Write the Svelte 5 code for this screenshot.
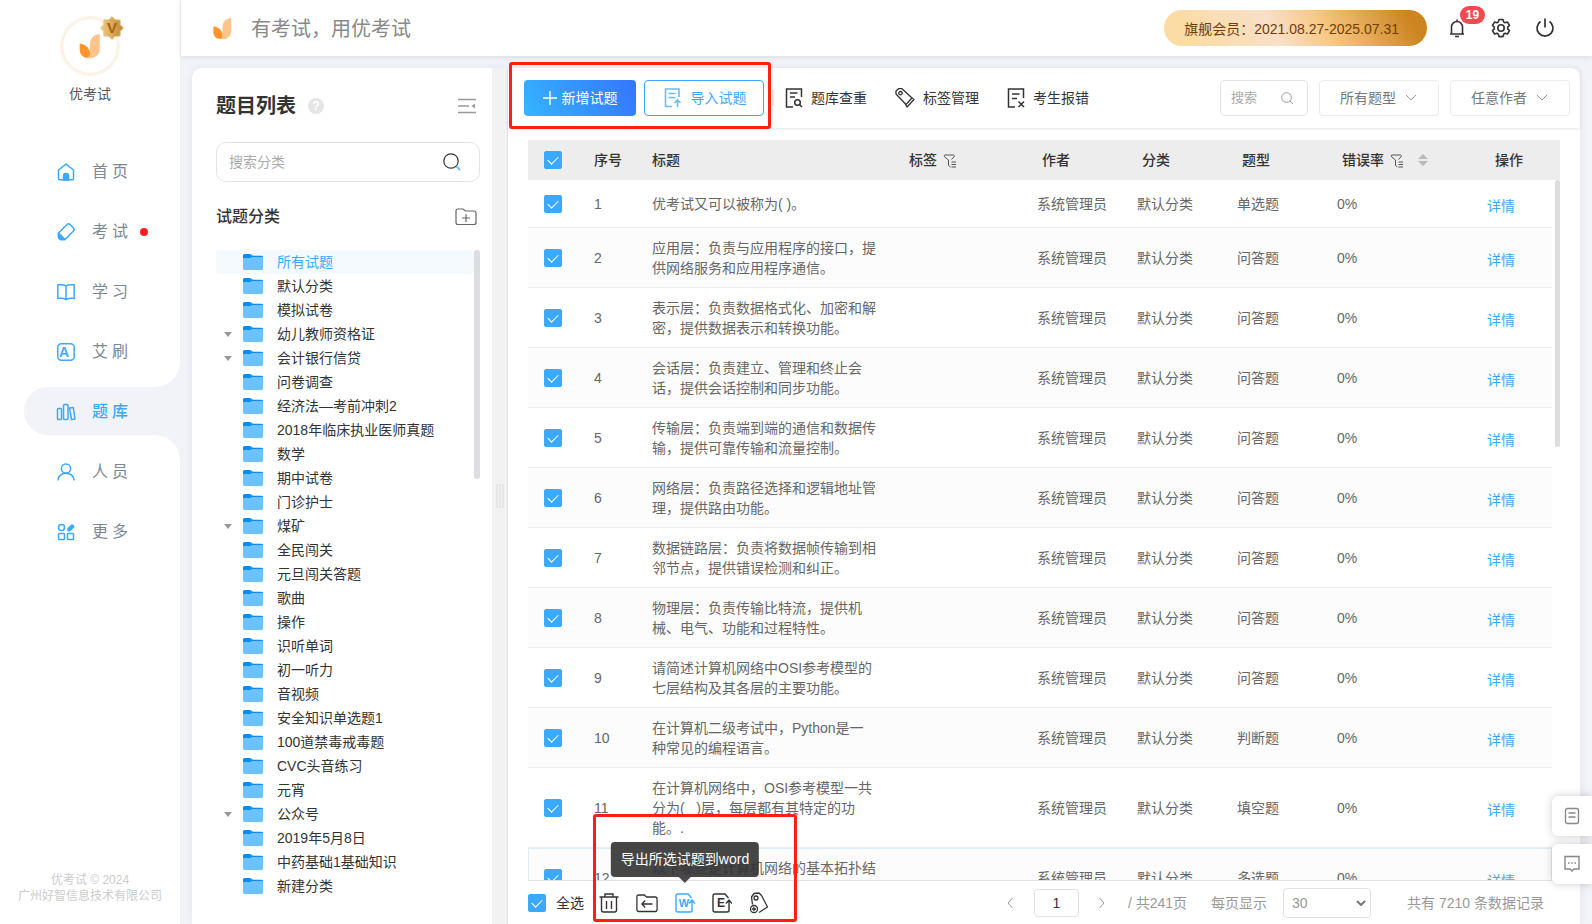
<script lang="ts">
	interface Question {
		title: string;
		type: string;
	}

	const navItems = [
		{ icon: 'home', label: '首页' },
		{ icon: 'exam', label: '考试', dot: true },
		{ icon: 'study', label: '学习' },
		{ icon: 'ai', label: '艾刷' },
		{ icon: 'bank', label: '题库' },
		{ icon: 'people', label: '人员' },
		{ icon: 'more', label: '更多' }
	];

	const categories = [
		{ name: '所有试题' },
		{ name: '默认分类' },
		{ name: '模拟试卷' },
		{ name: '幼儿教师资格证', children: true },
		{ name: '会计银行信贷', children: true },
		{ name: '问卷调查' },
		{ name: '经济法—考前冲刺2' },
		{ name: '2018年临床执业医师真题' },
		{ name: '数学' },
		{ name: '期中试卷' },
		{ name: '门诊护士' },
		{ name: '煤矿', children: true },
		{ name: '全民闯关' },
		{ name: '元旦闯关答题' },
		{ name: '歌曲' },
		{ name: '操作' },
		{ name: '识听单词' },
		{ name: '初一听力' },
		{ name: '音视频' },
		{ name: '安全知识单选题1' },
		{ name: '100道禁毒戒毒题' },
		{ name: 'CVC头音练习' },
		{ name: '元宵' },
		{ name: '公众号', children: true },
		{ name: '2019年5月8日' },
		{ name: '中药基础1基础知识' },
		{ name: '新建分类' }
	];

	const questions: Question[] = [
		{ title: '优考试又可以被称为( )。', type: '单选题' },
		{ title: '应用层：负责与应用程序的接口，提供网络服务和应用程序通信。', type: '问答题' },
		{ title: '表示层：负责数据格式化、加密和解密，提供数据表示和转换功能。', type: '问答题' },
		{ title: '会话层：负责建立、管理和终止会话，提供会话控制和同步功能。', type: '问答题' },
		{ title: '传输层：负责端到端的通信和数据传输，提供可靠传输和流量控制。', type: '问答题' },
		{ title: '网络层：负责路径选择和逻辑地址管理，提供路由功能。', type: '问答题' },
		{ title: '数据链路层：负责将数据帧传输到相邻节点，提供错误检测和纠正。', type: '问答题' },
		{ title: '物理层：负责传输比特流，提供机械、电气、功能和过程特性。', type: '问答题' },
		{ title: '请简述计算机网络中OSI参考模型的七层结构及其各层的主要功能。', type: '问答题' },
		{ title: '在计算机二级考试中，Python是一种常见的编程语言。', type: '判断题' },
		{ title: '在计算机网络中，OSI参考模型一共分为(\u00a0\u00a0\u00a0)层，每层都有其特定的功能。.', type: '填空题' },
		{ title: '以下哪些是计算机网络的基本拓扑结构？', type: '多选题' }
	];

	let activeNav = $state('题库');
	let activeCategory = $state('所有试题');
	let checked = $state(questions.map(() => true));
	let allChecked = $derived(checked.every(Boolean));

	function toggleAll() {
		const next = !allChecked;
		checked = questions.map(() => next);
	}
</script>

{#snippet leaf(size: number)}
	<svg width={size} height={size} viewBox="0 0 22 24">
		<path d="M20 1C14 1.500 11 5.500 11 11v6c0 3-2 5-4 5.500 6 2.500 13-1 13-7.500Z" fill="#ffc48c" />
		<path d="M1.500 10c6 .5 9.500 4.500 9.500 9 0 3-2 3.800-4 3.800-3.500-.8-5.500-4-5.500-7.500Z" fill="#ff942b" />
	</svg>
{/snippet}

{#snippet navIcon(name: string)}
	<svg class="nav-icon" viewBox="0 0 20 20" fill="none" stroke="#3ba9ff" stroke-width="1.5" stroke-linejoin="round">
		{#if name === 'home'}
			<path d="M2.5 8 10 2.200 17.5 8v8.500a1.200 1.200 0 0 1-1.200 1.200H3.700a1.200 1.200 0 0 1-1.200-1.200Z" />
			<path d="M7.500 18v-4a2.500 2.500 0 0 1 5 0v4Z" fill="#3ba9ff" />
		{:else if name === 'exam'}
			<path d="M11 2.500c1-1 2-1 3 0l3.500 3.500c1 1 1 2 0 3L9 17.500H4L2.500 15v-4Z" />
			<path d="M2.500 11 9 17.500H4.500L2.500 15.500Z" fill="#3ba9ff" />
		{:else if name === 'study'}
			<path d="M10 3.800C8 2.500 5 2.500 1.800 2.800v13.700c3-.3 6-.2 8.200 1 2.200-1.200 5.200-1.300 8.200-1V2.800C15 2.500 12 2.500 10 3.800ZM10 4v13.500" />
		{:else if name === 'ai'}
			<rect x="1.800" y="1.800" width="16.400" height="16.400" rx="3.500" />
			<text x="10" y="15" text-anchor="middle" font-size="14" font-weight="700" fill="#3ba9ff" stroke="none">A</text>
		{:else if name === 'bank'}
			<rect x="1.500" y="6.500" width="4" height="11" rx=".8" />
			<rect x="7.500" y="2.500" width="4.500" height="15" rx="1" />
			<path d="m13.500 6 3.800-.6 1.700 11.500-3.500.6Z" />
		{:else if name === 'people'}
			<circle cx="10" cy="6.500" r="4.600" />
			<path d="M2 18.500c0-4.500 3.500-7.300 8-7.300s8 2.800 8 7.300" />
		{:else}
			<circle cx="5.500" cy="5.500" r="3" />
			<path d="m12.500 7 3.500-3.500 1.200 1.200L13.700 8.200h-1.200Z" fill="#3ba9ff" stroke-width="2.500" />
			<rect x="2.500" y="11.500" width="6" height="6" rx=".8" />
			<rect x="11.500" y="11.500" width="6" height="6" rx=".8" />
		{/if}
	</svg>
{/snippet}

{#snippet folder()}
	<svg class="folder" width="20" height="16" viewBox="0 0 20 16">
		<path d="M0 1.500Q0 0 1.500 0H7l3 1.700h8.500Q20 1.700 20 3v5H0Z" fill="#0a8cf0" />
		<path d="M0 4h7l2-1h11v11.500q0 1.500-1.500 1.500h-17Q0 16 0 14.500Z" fill="#6bc2ff" />
	</svg>
{/snippet}

{#snippet filter()}
	<svg width="14" height="14" viewBox="0 0 14 14" fill="none" stroke="#555" stroke-width="1">
		<path d="M7.500 13 5.500 11.500V6L1.500 2.800Q.5 1 2 1h8.500q1.500.2.500 1.800L8.500 5.500M8.500 8H13M8.500 10.500H13M8.500 13H13" />
	</svg>
{/snippet}

{#snippet chevron()}
	<svg class="chevron" width="12" height="8" viewBox="0 0 12 8" fill="none" stroke="#999"><path d="m1 1 5 5 5-5" /></svg>
{/snippet}

<div class="app">
	<aside class="sidebar">
		<div class="avatar">
			{@render leaf(26)}
			<svg class="vip" width="24" height="24" viewBox="0 0 24 24">
				<defs>
					<linearGradient id="gold" x1="0" x2="1"><stop stop-color="#f0cd86" /><stop offset="1" stop-color="#c0852f" /></linearGradient>
				</defs>
				<path d="m12 .5 3.200 3.200 4.900.2.200 4.800L23.500 12l-3.200 3.300-.2 4.800-4.900.2L12 23.500l-3.200-3.200-4.900-.2-.2-4.800L.5 12l3.200-3.300.2-4.800 4.900-.2Z" fill="url(#gold)" stroke="#e8c88a" />
				<text x="12" y="17" text-anchor="middle" font-size="15" font-weight="700" fill="#a86410">V</text>
			</svg>
		</div>
		<div class="org">优考试</div>
		<nav>
			{#each navItems as item}
				<a href="#{item.icon}" class="nav-item" class:active={item.label === activeNav} onclick={() => (activeNav = item.label)}>
					{@render navIcon(item.icon)}
					<span>{item.label}</span>
					{#if item.dot}<i class="dot"></i>{/if}
				</a>
			{/each}
		</nav>
		<div class="copyright">优考试 © 2024<br />广州好智信息技术有限公司</div>
	</aside>

	<div class="page">
		<header>
			{@render leaf(23)}
			<span class="slogan">有考试，用优考试</span>
			<div class="member">旗舰会员：2021.08.27-2025.07.31</div>
			<button class="icon-btn bell" aria-label="消息">
				<svg width="20" height="20" viewBox="0 0 20 20" fill="none" stroke="#333" stroke-width="1.6">
					<path d="M3 16h14M4.500 15.500V9a5.500 5.500 0 0 1 11 0v6.500M8 18.500h4M10 1.500v2" />
				</svg>
				<span class="count">19</span>
			</button>
			<button class="icon-btn" aria-label="设置">
				<svg width="20" height="20" viewBox="0 0 20 20" fill="none" stroke="#333" stroke-width="1.6" stroke-linejoin="round">
					<path d="M8 1.500h4l.6 2.400 1.500.9 2.400-.7 2 3.400-1.800 1.700v1.700l1.800 1.700-2 3.400-2.400-.7-1.500.9-.6 2.400H8l-.6-2.400-1.500-.9-2.400.7-2-3.400 1.800-1.700V9.200L1.500 7.500l2-3.400 2.400.7 1.500-.9Z" />
					<circle cx="10" cy="10" r="3.200" />
				</svg>
			</button>
			<button class="icon-btn" aria-label="退出">
				<svg width="20" height="20" viewBox="0 0 20 20" fill="none" stroke="#333" stroke-width="1.7">
					<path d="M5.500 3.500a8 8 0 1 0 9 0M10 .5v9" />
				</svg>
			</button>
		</header>

		<main>
			<section class="category">
				<div class="category-head">
					<h1>题目列表</h1>
					<span class="help">?</span>
					<button class="plain" aria-label="收起">
						<svg width="20" height="16" viewBox="0 0 20 16" fill="none" stroke="#999" stroke-width="1.5">
							<path d="M1 1.500h18M1 8h11M1 14.500h18" />
							<path d="m18 5.500-3.500 2.500 3.500 2.500Z" fill="#999" stroke="none" />
						</svg>
					</button>
				</div>
				<label class="category-search">
					<input type="text" placeholder="搜索分类" />
					<svg width="18" height="18" viewBox="0 0 18 18" fill="none" stroke="#333" stroke-width="1.2">
						<circle cx="8" cy="8" r="7.2" />
						<path d="m13.500 13.500 3.500 3.500" stroke="#6bc2ff" stroke-width="2" />
					</svg>
				</label>
				<div class="category-title">
					<h2>试题分类</h2>
					<button class="plain" aria-label="新建分类">
						<svg width="22" height="18" viewBox="0 0 22 18" fill="none" stroke="#666" stroke-width="1.2">
							<path d="M1 3q0-2 2-2h5l2.500 2H19q2 0 2 2v9.500q0 2-2 2H3q-2 0-2-2ZM11 6v8M7 10h8" />
						</svg>
					</button>
				</div>
				<div class="tree">
					<ul>
						{#each categories as item}
							<li>
								<button class:active={item.name === activeCategory} onclick={() => (activeCategory = item.name)}>
									<i class="caret" class:shown={item.children}></i>
									{@render folder()}
									<span>{item.name}</span>
								</button>
							</li>
						{/each}
					</ul>
					<div class="bar"></div>
				</div>
			</section>

			<div class="splitter"><i></i><i></i><i></i></div>

			<section class="content">
				<div class="toolbar">
					<button class="primary">
						<svg width="14" height="14" viewBox="0 0 14 14" stroke="#fff" stroke-width="1.4"><path d="M7 0v14M0 7h14" /></svg>
						新增试题
					</button>
					<button class="outline">
						<svg width="18" height="20" viewBox="0 0 18 20" fill="none" stroke="#6bbcff" stroke-width="1.6">
							<path d="M15 9V1H1.500v17.500H8M4.500 5.500h7M4.500 9.500h7M13.500 19v-7M10.500 15l3-3 3 3" />
						</svg>
						导入试题
					</button>
					<i class="divider"></i>
					<button class="link">
						<svg width="18" height="20" viewBox="0 0 18 20" fill="none" stroke="#333" stroke-width="1.5">
							<path d="M16.500 9V1H1.500v18H8M5 5h7.500M5 9h5" />
							<circle cx="12.500" cy="14.500" r="2.800" />
							<path d="m14.500 16.500 2.500 2.500" />
						</svg>
						题库查重
					</button>
					<button class="link">
						<svg width="20" height="20" viewBox="0 0 20 20" fill="none" stroke="#333" stroke-width="1.3" stroke-linejoin="round">
							<path d="M1 6V3l2.500-2.300H7L17 10l-6 6.500ZM17 10l2 1.500-7 7.500-2-3.500" />
							<circle cx="5.500" cy="5.200" r="1.700" />
						</svg>
						标签管理
					</button>
					<button class="link">
						<svg width="18" height="20" viewBox="0 0 18 20" fill="none" stroke="#333" stroke-width="1.5">
							<path d="M16.500 10V1H1.500v18H8M5 6h7.500M5 10.500h5M11.500 13.500l5.500 5.500M17 13.500 11.500 19" />
						</svg>
						考生报错
					</button>
					<label class="keyword">
						<input type="text" placeholder="搜索" />
						<svg width="13" height="13" viewBox="0 0 13 13" fill="none" stroke="#999"><circle cx="5.500" cy="5.500" r="4.8" /><path d="m9 9 3 3" /></svg>
					</label>
					<label class="drop">
						<select aria-label="题型"><option>所有题型</option></select>
						{@render chevron()}
					</label>
					<label class="drop">
						<select aria-label="作者"><option>任意作者</option></select>
						{@render chevron()}
					</label>
					<div class="mark mark-top"></div>
				</div>

				<div class="table-area">
					<table>
						<colgroup>
							<col class="c-check" /><col class="c-no" /><col /><col class="c-tag" />
							<col class="c-mid" /><col class="c-mid" /><col class="c-mid" /><col class="c-rate" /><col class="c-op" />
						</colgroup>
						<thead>
							<tr>
								<th class="check"><input type="checkbox" aria-label="全选" checked={allChecked} onchange={toggleAll} /></th>
								<th class="tight">序号</th>
								<th class="tight">标题</th>
								<th>标签 {@render filter()}</th>
								<th>作者</th>
								<th>分类</th>
								<th>题型</th>
								<th>
									错误率 {@render filter()}
									<svg class="sort" width="10" height="12" viewBox="0 0 10 12" fill="#bbb"><path d="m5 0 5 5H0ZM5 12l5-5H0Z" /></svg>
								</th>
								<th class="wide">操作</th>
							</tr>
						</thead>
						<tbody>
							{#each questions as q, i}
								<tr class:hovered={i === 11}>
									<td class="check"><input type="checkbox" aria-label="选择第{i + 1}题" bind:checked={checked[i]} /></td>
									<td>{i + 1}</td>
									<td class="title">{q.title}</td>
									<td></td>
									<td>系统管理员</td>
									<td>默认分类</td>
									<td>{q.type}</td>
									<td>0%</td>
									<td class="op"><a href="#detail">详情</a></td>
								</tr>
							{/each}
						</tbody>
					</table>
					<div class="bar"></div>
				</div>

				<footer>
					<label class="all"><input type="checkbox" checked={allChecked} onchange={toggleAll} />全选</label>
					<div class="actions">
						<button class="plain" aria-label="删除">
							<svg width="20" height="20" viewBox="0 0 20 20" fill="none" stroke="#333" stroke-width="1.4">
								<path d="M.5 4h19M6 4V1h8v3M2.500 4v13q0 2 2 2h11q2 0 2-2V4M7.500 8v8M12.500 8v8" />
							</svg>
						</button>
						<button class="plain" aria-label="移动">
							<svg width="22" height="20" viewBox="0 0 24 20" preserveAspectRatio="none" fill="none" stroke="#333" stroke-width="1.4">
								<path d="M1 4q0-2 2-2h6l2.500 2H21q2 0 2 2v10.500q0 2-2 2H3q-2 0-2-2ZM18 11H6.500M10 7.500 6.500 11l3.500 3.500" />
							</svg>
						</button>
						<button class="plain export" aria-label="导出所选试题到word">
							<svg width="20" height="20" viewBox="0 0 20 20" fill="none" stroke="#3ba9ff" stroke-width="1.4">
								<path d="M16.500 5 13 1H3Q1 1 1 3v14q0 2 2 2h12q2 0 2-1.500M17 18V7.500M14 10.500 17 7l3 3.500" />
								<text x="9" y="14" text-anchor="middle" font-size="11" font-weight="700" fill="#3ba9ff" stroke="none">W</text>
							</svg>
							<span class="tip">导出所选试题到word</span>
						</button>
						<button class="plain" aria-label="导出所选试题到excel">
							<svg width="20" height="20" viewBox="0 0 20 20" fill="none" stroke="#333" stroke-width="1.4">
								<path d="M16.500 5 13 1H3Q1 1 1 3v14q0 2 2 2h12q2 0 2-1.500M17 18V7.500M14 10.500 17 7l3 3.500" />
								<text x="9" y="14" text-anchor="middle" font-size="12" font-weight="700" fill="#333" stroke="none">E</text>
							</svg>
						</button>
						<button class="plain" aria-label="设置标签">
							<svg width="20" height="22" viewBox="0 0 20 22" fill="none" stroke="#333" stroke-width="1.3" stroke-linejoin="round">
								<path d="M3.500 12.500 2.500 5 5 1.500 10 1l2.500 2.500 6 11.500-8.500 5.500" />
								<circle cx="7" cy="6" r="2" />
								<circle cx="5" cy="17" r="3.5" />
								<path d="M5 15v4M3 17h4" />
							</svg>
						</button>
						<div class="mark mark-bottom"></div>
					</div>
					<div class="pager">
						<button class="plain" aria-label="上一页"><svg width="6" height="12" viewBox="0 0 6 12" fill="none" stroke="#999"><path d="M5.500 1 1 6l4.500 5" /></svg></button>
						<input type="text" value="1" aria-label="页码" />
						<button class="plain" aria-label="下一页"><svg width="6" height="12" viewBox="0 0 6 12" fill="none" stroke="#999"><path d="M.5 1 5 6 .5 11" /></svg></button>
						<span class="pages">/ 共241页</span>
						<label class="size">
							每页显示
							<span class="size-box">
								<select><option>30</option></select>
								<svg width="10" height="6" viewBox="0 0 10 6" fill="none" stroke="#777" stroke-width="2"><path d="m1 1 4 4 4-4" /></svg>
							</span>
						</label>
						<span>共有 7210 条数据记录</span>
					</div>
				</footer>
			</section>
		</main>
	</div>

	<div class="float">
		<button aria-label="帮助文档">
			<svg width="16" height="18" viewBox="0 0 16 18" fill="none" stroke="#888" stroke-width="1.4"><rect x="1.500" y="1.500" width="13" height="15" rx="2" /><path d="M4.500 6h7M4.500 10h7" /></svg>
		</button>
		<button aria-label="在线客服">
			<svg width="18" height="18" viewBox="0 0 18 18" fill="none" stroke="#888" stroke-width="1.4"><path d="M2 1.500h14v12.500h-5l-2 2-2-2H2Z" /><path d="M5 8h1.500M8.300 8h1.500M11.500 8H13" stroke-width="1.6" /></svg>
		</button>
	</div>
</div>

<style>
	:global(body) {
		background: #f2f3f8;
	}

	.app {
		display: flex;
		height: 100vh;
		overflow: hidden;
		position: relative;
		font-family: 'Liberation Sans', 'Noto Sans CJK SC', sans-serif;
		font-size: 14px;
		line-height: 20px;
		color: #333;
	}

	.app * {
		box-sizing: border-box;
	}

	svg {
		display: block;
		flex: none;
	}

	button,
	input,
	select {
		font: inherit;
		color: inherit;
		border: 0;
		background: none;
		padding: 0;
		margin: 0;
		outline: 0;
	}

	select {
		appearance: none;
	}

	a {
		text-decoration: none;
	}

	input::placeholder {
		color: #aaa;
	}

	input[type='checkbox'] {
		appearance: none;
		display: block;
		flex: none;
		position: relative;
		width: 18px;
		height: 18px;
		border-radius: 2px;
		border: 1px solid #3ba9ff;
	}

	input[type='checkbox']:checked {
		background: #3ba9ff;
	}

	input[type='checkbox']:checked::before {
		content: '';
		position: absolute;
		left: 5px;
		top: 2px;
		width: 5px;
		height: 9px;
		border: solid #fff;
		border-width: 0 1px 1px 0;
		transform: rotate(45deg);
	}

	.sidebar {
		width: 180px;
		flex: none;
		display: flex;
		flex-direction: column;
		align-items: center;
		background: #fff;
		padding-top: 16px;
	}

	.avatar {
		position: relative;
		width: 60px;
		height: 60px;
		border-radius: 50%;
		border: 2px solid #fbf4e9;
		box-shadow: inset 0 0 0 1px #f8ecd8;
		display: flex;
		align-items: center;
		justify-content: center;
	}

	.vip {
		position: absolute;
		right: -6px;
		top: -2px;
	}

	.org {
		margin-top: 8px;
		color: #555;
	}

	nav {
		align-self: stretch;
		margin-top: 43px;
		display: flex;
		flex-direction: column;
		gap: 12px;
		padding-left: 24px;
	}

	.nav-item {
		position: relative;
		display: flex;
		align-items: center;
		height: 48px;
		padding: 2px 0 0 32px;
		font-size: 16px;
		letter-spacing: 4px;
		color: #7a8896;
		border-radius: 24px 0 0 24px;
	}

	.nav-icon {
		width: 20px;
		height: 20px;
		margin-right: 16px;
	}

	.nav-item.active {
		background: #f2f3f8;
		color: #3ba9ff;
		font-weight: 500;
	}

	.nav-item.active::before,
	.nav-item.active::after {
		content: '';
		position: absolute;
		right: 0;
		width: 24px;
		height: 24px;
	}

	.nav-item.active::before {
		bottom: 100%;
		background: radial-gradient(circle at 0 0, #fff 23px, #f2f3f8 24px);
	}

	.nav-item.active::after {
		top: 100%;
		background: radial-gradient(circle at 0 100%, #fff 23px, #f2f3f8 24px);
	}

	.dot {
		width: 8px;
		height: 8px;
		margin-left: 8px;
		border-radius: 50%;
		background: #ff1e28;
	}

	.copyright {
		margin-top: auto;
		padding-bottom: 20px;
		font-size: 12px;
		line-height: 16px;
		text-align: center;
		color: #ccc;
	}

	.page {
		flex: 1;
		min-width: 0;
		display: flex;
		flex-direction: column;
	}

	header {
		display: flex;
		align-items: center;
		flex: none;
		height: 56px;
		margin-left: 1px;
		padding: 0 37px 0 30px;
		background: #fff;
		box-shadow: 0 1px 6px rgba(0, 0, 40, 0.1);
	}

	.slogan {
		margin-left: 17px;
		padding-top: 2px;
		font-size: 20px;
		color: #888;
	}

	.member {
		margin-left: auto;
		margin-right: 20px;
		padding: 9px 28px 7px 20px;
		border-radius: 18px;
		background: linear-gradient(60deg, #fbdca4 10%, #f8dfc8 42%, #f8c884 60%, #cc8520 92%);
		color: #703c08;
	}

	.icon-btn {
		position: relative;
		margin-left: 24px;
	}

	.icon-btn.bell {
		margin-left: 0;
	}

	.count {
		position: absolute;
		left: 13px;
		top: -12px;
		width: 25px;
		border-radius: 9px;
		background: #f04b50;
		color: #fff;
		font-size: 12px;
		font-weight: 700;
		line-height: 18px;
	}

	main {
		flex: 1;
		min-height: 0;
		display: flex;
		margin: 12px 12px 0;
		border-radius: 10px 10px 0 0;
		background: #fff;
		box-shadow: 0 0 8px rgba(0, 0, 60, 0.06);
	}

	.category {
		width: 300px;
		flex: none;
		padding: 24px 12px 0 24px;
		display: flex;
		flex-direction: column;
	}

	.category-head,
	.category-title {
		display: flex;
		align-items: center;
		padding-right: 3px;
	}

	.category-head .plain,
	.category-title .plain {
		margin-left: auto;
	}

	h1 {
		margin: 0;
		font-size: 20px;
		line-height: 28px;
	}

	.help {
		width: 16px;
		margin-left: 12px;
		border-radius: 50%;
		background: #e6e6e6;
		color: #fff;
		font-size: 12px;
		font-weight: 700;
		line-height: 16px;
		text-align: center;
	}

	.category-search {
		display: flex;
		align-items: center;
		flex: none;
		height: 40px;
		margin-top: 22px;
		padding: 0 18px 0 12px;
		border: 1px solid #e3e3e6;
		border-radius: 10px;
	}

	.category-search input {
		flex: 1;
		min-width: 0;
	}

	.category-title {
		margin-top: 23px;
	}

	h2 {
		margin: 0;
		font-size: 16px;
		font-weight: 500;
		line-height: 24px;
	}

	.tree {
		position: relative;
		flex: 1;
		min-height: 0;
		margin-top: 21px;
		overflow: hidden;
	}

	.tree ul {
		margin: 0;
		padding: 0 6px 0 0;
		list-style: none;
	}

	.tree button {
		display: flex;
		align-items: center;
		width: 100%;
		height: 24px;
		padding-left: 8px;
		border-radius: 4px;
	}

	.tree button.active {
		background: #f4faff;
		color: #3ba9ff;
	}

	.caret {
		border: 4px solid transparent;
		border-bottom: 0;
		border-top-width: 5px;
	}

	.caret.shown {
		border-top-color: #999;
	}

	.folder {
		margin: 0 14px 0 11px;
	}

	.bar {
		position: absolute;
		right: 0;
		top: 0;
		width: 6px;
		height: 229px;
		border-radius: 3px;
		background: #dcdde0;
	}

	.splitter {
		width: 16px;
		flex: none;
		display: flex;
		align-items: center;
		justify-content: center;
		gap: 1px;
		background: #f2f2f2;
		border-right: 1px solid #e4e4e6;
	}

	.splitter i {
		width: 2px;
		height: 24px;
		background: #e6e6e6;
	}

	.content {
		flex: 1;
		min-width: 0;
		display: flex;
		flex-direction: column;
	}

	.toolbar {
		position: relative;
		display: flex;
		align-items: center;
		flex: none;
		height: 60px;
		padding: 0 10px 0 16px;
		box-shadow: 0 1px 3px rgba(0, 0, 0, 0.1);
	}

	.toolbar button {
		display: flex;
		align-items: center;
		justify-content: center;
		white-space: nowrap;
	}

	.primary {
		width: 112px;
		height: 36px;
		gap: 5px;
		border-radius: 4px;
		background: linear-gradient(60deg, #35b5ff, #3575ff);
		color: #fff;
	}

	.outline {
		width: 120px;
		height: 36px;
		gap: 9px;
		margin-left: 8px;
		padding-left: 2px;
		border: 1px solid #3ba9ff;
		border-radius: 4px;
		color: #3ba9ff;
	}

	.divider {
		width: 2px;
		height: 16px;
		margin: 0 11px 0 8px;
		background: #e4e4e4;
	}

	.link {
		gap: 8px;
		margin-right: 28px;
	}

	.keyword,
	.drop {
		position: relative;
		display: flex;
		align-items: center;
		height: 36px;
		border: 1px solid #e4e4e4;
		border-radius: 4px;
		color: #777;
	}

	.keyword {
		width: 88px;
		margin-left: auto;
		padding: 0 13px 0 10px;
		font-size: 13px;
	}

	.keyword input {
		flex: 1;
		min-width: 0;
	}

	.drop {
		width: 120px;
		margin-left: 11px;
		border-color: #ececec;
	}

	.drop select {
		width: 100%;
		height: 34px;
		padding-left: 20px;
	}

	.chevron {
		position: absolute;
		right: 21px;
		pointer-events: none;
	}

	.mark {
		position: absolute;
		border: 3px solid #ff1e14;
		border-radius: 3px;
		pointer-events: none;
	}

	.mark-top {
		left: 1px;
		top: -6px;
		width: 262px;
		height: 67px;
	}

	.mark-bottom {
		left: -6px;
		top: -78px;
		width: 204px;
		height: 108px;
	}

	.table-area {
		position: relative;
		flex: 1;
		min-height: 0;
		margin: 12px 20px 0;
		overflow: hidden;
	}

	.table-area .bar {
		top: 40px;
		width: 5px;
		height: 267px;
	}

	table {
		width: calc(100% - 8px);
		table-layout: fixed;
		border-collapse: separate;
		border-spacing: 0;
	}

	.c-check {
		width: 56px;
	}

	.c-no {
		width: 58px;
	}

	.c-tag {
		width: 133px;
	}

	.c-mid {
		width: 100px;
	}

	.c-rate {
		width: 150px;
	}

	.c-op {
		width: 75px;
	}

	th {
		height: 40px;
		padding: 0 0 0 15px;
		background: #ededed;
		font-weight: 500;
		text-align: left;
		white-space: nowrap;
	}

	th.tight {
		padding-left: 10px;
	}

	th.wide {
		padding-left: 18px;
	}

	th:last-child {
		box-shadow: 8px 0 0 #ededed;
	}

	th svg {
		display: inline-block;
		margin-left: 2px;
		vertical-align: -3px;
	}

	th .sort {
		margin-left: 10px;
		vertical-align: -1px;
	}

	td {
		height: 48px;
		padding: 10px 0 9px 10px;
		border-bottom: 1px solid #ececec;
		color: #666;
	}

	th.check,
	td.check {
		padding-left: 16px;
	}

	td.title {
		padding-right: 17px;
	}

	tbody tr:nth-child(even) {
		background: #fcfcfc;
	}

	.hovered td {
		border-top: 1px solid #dcecf8;
		padding-top: 9px;
	}

	.hovered td:first-child {
		border-left: 1px solid #dcecf8;
		padding-left: 15px;
	}

	.hovered td:last-child {
		border-right: 1px solid #dcecf8;
	}

	td.op {
		padding-top: 13px;
		padding-bottom: 8px;
	}

	td a {
		color: #3ba9ff;
	}

	footer {
		display: flex;
		align-items: center;
		flex: none;
		height: 44px;
		margin: 0 28px 0 20px;
		border-top: 1px solid #e2e2e4;
	}

	.all {
		display: flex;
		align-items: center;
		gap: 10px;
	}

	.actions {
		position: relative;
		display: flex;
		align-items: center;
		gap: 17px;
		margin-left: 15px;
	}

	.export {
		position: relative;
	}

	.tip {
		position: absolute;
		left: 50%;
		bottom: 36px;
		transform: translateX(-50%);
		padding: 8px 10px;
		border-radius: 4px;
		background: rgba(50, 50, 50, 0.9);
		color: #fff;
		line-height: 19px;
		white-space: nowrap;
	}

	.tip::after {
		content: '';
		position: absolute;
		left: 50%;
		top: 100%;
		margin-left: -6px;
		border: 6px solid transparent;
		border-top-color: #494949;
		border-bottom: 0;
	}

	.pager {
		display: flex;
		align-items: center;
		margin-left: auto;
		padding-right: 8px;
		color: #999;
		white-space: nowrap;
	}

	.pager input {
		width: 45px;
		height: 28px;
		margin: 0 20px 0 21px;
		border: 1px solid #e2e2e4;
		border-radius: 4px;
		color: #333;
		text-align: center;
	}

	.pages {
		margin: 0 24px 0 23px;
	}

	.size {
		display: flex;
		align-items: center;
		gap: 16px;
		margin-right: 36px;
	}

	.size-box {
		position: relative;
		display: flex;
		align-items: center;
	}

	.size-box select {
		width: 88px;
		height: 30px;
		padding-left: 8px;
		border: 1px solid #e2e2e4;
		border-radius: 4px;
	}

	.size-box svg {
		position: absolute;
		right: 5px;
		pointer-events: none;
	}

	.float {
		position: absolute;
		right: 0;
		bottom: 40px;
		display: flex;
		flex-direction: column;
		gap: 8px;
	}

	.float button {
		display: flex;
		align-items: center;
		justify-content: center;
		width: 40px;
		height: 40px;
		border-radius: 6px 0 0 6px;
		background: #fff;
		box-shadow: 0 0 8px rgba(0, 0, 0, 0.2);
	}
</style>
